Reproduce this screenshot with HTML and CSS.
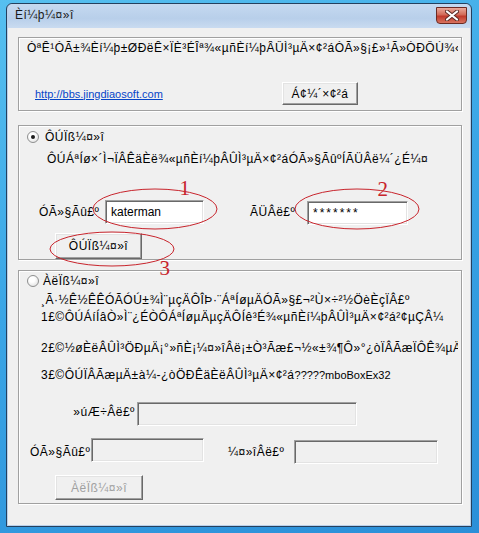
FILE: index.html
```html
<!DOCTYPE html>
<html lang="zh">
<head>
  <meta charset="UTF-8">
  <title>Èí¼þ¼¤»î</title>
  <link rel="stylesheet" href="styles.css">
</head>
<body>

<div class="window">
  <div class="titlebar">
    <span class="title">Èí¼þ¼¤»î</span>
    <span class="close">
      <svg width="14" height="11" viewBox="0 0 14 11">
        <path d="M2 1.5 L12 9.5 M12 1.5 L2 9.5" stroke="#5a2a24" stroke-width="4" stroke-linecap="round"/>
        <path d="M2 1.5 L12 9.5 M12 1.5 L2 9.5" stroke="#fff" stroke-width="2.2" stroke-linecap="round"/>
      </svg>
    </span>
  </div>

  <div class="client">
    <!-- inscription -->
    <div class="group g-reg">
      <p class="note">ÒªÊ¹ÓÃ±¾Èí¼þ±ØÐëÊ×ÏÈ³ÉÎª¾«µñÈí¼þÂÛÌ³µÄ×¢²áÓÃ»§¡£»¹Ã»ÓÐÔÚ¾«µñÈí¼þÂÛÌ³×¢²áµÄÓÃ»§</p>
      <div class="reg-row">
        <a class="link" href="#">http://bbs.jingdiaosoft.com</a>
        <button class="btn btn-reg">Á¢¼´×¢²á</button>
      </div>
    </div>

    <!-- activation en ligne -->
    <div class="group g-online">
      <div class="radio-row"><span class="radio checked"></span>ÔÚÏß¼¤»î</div>
      <p class="desc">ÔÚÁªÍø×´Ì¬ÏÂÊäÈë¾«µñÈí¼þÂÛÌ³µÄ×¢²áÓÃ»§ÃûºÍÃÜÂë¼´¿É¼¤</p>
      <div class="field-row">
        <span class="lbl lbl-user">ÓÃ»§Ãû£º</span>
        <input class="edit edit-user" type="text" value="katerman">
        <span class="lbl lbl-pass">ÃÜÂë£º</span>
        <input class="edit edit-pass" type="text" value="*******">
      </div>
      <button class="btn btn-online">ÔÚÏß¼¤»î</button>
    </div>

    <!-- activation hors ligne -->
    <div class="group g-offline">
      <div class="radio-row radio-off"><span class="radio"></span>ÀëÏß¼¤»î</div>
      <p class="step step-first">¸Ã·½Ê½ÊÊÓÃÓÚ±¾Ì¨µçÄÔÎÞ·¨ÁªÍøµÄÓÃ»§£¬²Ù×÷²½ÖèÈçÏÂ£º<br>1£©ÔÚÁíÍâÒ»Ì¨¿ÉÒÔÁªÍøµÄµçÄÔÍê³É¾«µñÈí¼þÂÛÌ³µÄ×¢²á²¢µÇÂ¼</p>
      <p class="step step-two">2£©½øÈëÂÛÌ³ÖÐµÄ¡°»ñÈ¡¼¤»îÂë¡±Ò³Ãæ£¬½«±¾¶Ô»°¿òÏÂÃæÏÔÊ¾µÄ»úÆ÷Âë</p>
      <p class="step step-three">3£©ÔÚÏÂÃæµÄ±à¼-¿òÖÐÊäÈëÂÛÌ³µÄ×¢²á<span class="ascii">?????mboBoxEx32</span></p>
      <div class="machine-row">
        <span class="lbl lbl-machine">»úÆ÷Âë£º</span>
        <input class="edit edit-machine" type="text" disabled>
      </div>
      <div class="offline-row">
        <span class="lbl lbl-user2">ÓÃ»§Ãû£º</span>
        <input class="edit edit-user2" type="text" disabled>
        <span class="lbl lbl-code">¼¤»îÂë£º</span>
        <input class="edit edit-code" type="text" disabled>
      </div>
      <button class="btn btn-offline" disabled>ÀëÏß¼¤»î</button>
    </div>
  </div>
</div>

<!-- annotations rouges -->
<svg class="marks" width="479" height="533" viewBox="0 0 479 533">
  <g fill="none" stroke="#c8242c" stroke-width="1">
    <ellipse cx="155" cy="209" rx="62" ry="20"/>
    <ellipse cx="357" cy="209" rx="62" ry="20"/>
    <ellipse cx="112" cy="249" rx="62" ry="17"/>
  </g>
  <g fill="#c8242c" font-family="Liberation Serif, serif" font-size="21" text-anchor="middle">
    <text x="185" y="195">1</text>
    <text x="383" y="196">2</text>
    <text x="165" y="275">3</text>
  </g>
</svg>

</body>
</html>
```

FILE: styles.css
```css
body {
  margin: 0;
  padding: 3px 0 0 6px;
  width: 479px;
  height: 533px;
  box-sizing: border-box;
  overflow: hidden;
  position: relative;
  background: linear-gradient(160deg, #56c0f0 0%, #3aa5e6 45%, #2b8fd8 100%);
  font-family: "Liberation Sans", Arial, sans-serif;
  font-size: 12px;
  letter-spacing: 0.5px;
  color: #000;
}
p {
  margin: 0;
}

.window {
  width: 466px;
  height: 524px;
  box-sizing: border-box;
  border: 1px solid #24405e;
  border-radius: 6px 6px 0 0;
  background: #b9d0ea;
  padding: 0 1px 1px;
  display: flex;
  flex-direction: column;
}
.titlebar {
  height: 24px;
  display: flex;
  align-items: flex-start;
  padding-left: 7px;
  border-radius: 5px 5px 0 0;
  background: linear-gradient(#c5d9f0, #b8cfea 60%, #c9dbf0);
}
.title {
  margin-top: 4px;
  line-height: 14px;
  color: #1a1a1a;
}
.close {
  margin: 3px 3px 0 auto;
  width: 31px;
  height: 17px;
  box-sizing: border-box;
  border: 1px solid #6b2a22;
  border-radius: 0 0 4px 4px;
  background: linear-gradient(#e9a99a, #d26a58 45%, #c0392b 55%, #d8735f);
  display: flex;
  align-items: center;
  justify-content: center;
}

.client {
  flex: 1;
  background: #f0f0f0;
  padding: 9px 0 0 10px;
}
.group {
  width: 444px;
  box-sizing: border-box;
  border: 1px solid #a0a0a0;
  box-shadow: inset 1px 1px 0 #fff, 1px 1px 0 #fff;
}
.g-reg {
  height: 74px;
  padding: 3px 3px 0 8px;
}
.g-online {
  height: 135px;
  margin-top: 14px;
  padding-top: 4px;
}
.g-offline {
  height: 234px;
  margin-top: 10px;
  padding-top: 3px;
}

.note {
  line-height: 14px;
  white-space: nowrap;
  overflow: hidden;
}
.reg-row {
  display: grid;
  grid-template-columns: 247px 76px;
  align-items: center;
  margin-top: 27px;
  padding-left: 8px;
}
.link {
  font-size: 11px;
  letter-spacing: 0;
  color: #0645c8;
  text-decoration: underline;
}

.btn {
  box-sizing: border-box;
  padding: 0;
  font: inherit;
  letter-spacing: inherit;
  color: #000;
  background: #f0f0f0;
  border: 1px solid;
  border-color: #fff #696969 #696969 #fff;
  box-shadow: inset -1px -1px 0 #a0a0a0, inset 1px 1px 0 #e3e3e3;
}
.btn:disabled {
  color: #a0a0a0;
}
.btn-reg {
  width: 76px;
  height: 23px;
}
.btn-online {
  display: block;
  width: 87px;
  height: 26px;
  margin: 8px 0 0 36px;
}
.btn-offline {
  display: block;
  width: 88px;
  height: 25px;
  margin: 11px 0 0 36px;
}

.radio-row {
  display: flex;
  align-items: center;
  line-height: 14px;
  padding-left: 8px;
}
.radio {
  width: 12px;
  height: 12px;
  box-sizing: border-box;
  border-radius: 50%;
  border: 1px solid #8e8f8f;
  background: radial-gradient(circle at 40% 35%, #fff 30%, #d8d8d8);
  margin-right: 6px;
  position: relative;
}
.radio-off .radio {
  margin-right: 4px;
}
.radio.checked::after {
  content: "";
  position: absolute;
  left: 3px;
  top: 3px;
  width: 4px;
  height: 4px;
  border-radius: 50%;
  background: #1b1b1b;
}

.desc {
  line-height: 14px;
  margin-top: 8px;
  padding-left: 28px;
  white-space: nowrap;
}

.edit {
  box-sizing: border-box;
  height: 24px;
  margin: 0;
  padding: 0 0 0 5px;
  font: inherit;
  letter-spacing: 0;
  color: #000;
  background: #fff;
  border: 1px solid;
  border-color: #a0a0a0 #fff #fff #a0a0a0;
  box-shadow: inset 1px 1px 0 #696969, inset -1px -1px 0 #e3e3e3;
  outline: none;
}
.edit:disabled {
  background: #f0f0f0;
}
.field-row,
.machine-row,
.offline-row {
  display: flex;
  align-items: center;
}
.field-row {
  margin-top: 33px;
  padding-left: 20px;
}
.lbl {
  white-space: nowrap;
}
.lbl-user {
  width: 66px;
}
.edit-user {
  width: 99px;
}
.lbl-pass {
  width: 57px;
  margin-left: 46px;
}
.edit-pass {
  width: 101px;
  margin-top: 2px;
  letter-spacing: 2px;
}

.step {
  line-height: 17px;
  padding-left: 22px;
  white-space: nowrap;
  overflow: hidden;
  margin-right: 3px;
}
.step-first {
  margin-top: 4px;
}
.step-two {
  margin-top: 14px;
}
.step-three {
  margin-top: 10px;
}
.ascii {
  font-size: 11px;
  letter-spacing: 0;
}

.machine-row {
  margin-top: 18px;
}
.lbl-machine {
  width: 118px;
  text-align: right;
  padding-right: 2px;
  box-sizing: border-box;
  margin-top: -4px;
}
.edit-machine {
  width: 220px;
}
.offline-row {
  margin-top: 12px;
  padding-left: 11px;
  align-items: flex-start;
  height: 26px;
}
.lbl-user2 {
  width: 61px;
  line-height: 24px;
  padding-top: 2px;
}
.edit-user2 {
  width: 113px;
}
.lbl-code {
  width: 66px;
  margin-left: 24px;
  line-height: 24px;
  padding-top: 2px;
}
.edit-code {
  width: 144px;
  margin-top: 2px;
}

.marks {
  position: absolute;
  left: 0;
  top: 0;
  pointer-events: none;
}
```
